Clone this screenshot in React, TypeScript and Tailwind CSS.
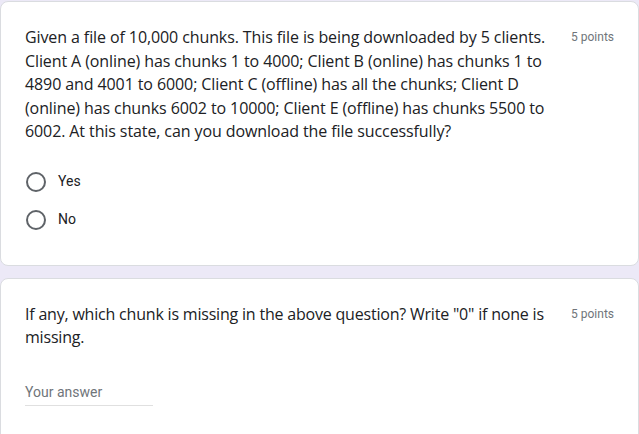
import React from 'react'

function Radio({ label }: { label: string }) {
  return (
    <label className="flex h-[38px] items-center gap-[12px]">
      <span className="h-[20px] w-[20px] rounded-full border-2 border-[#5f6368]" />
      <span className="text-[14px] text-[#202124]" style={{ fontFamily: 'Roboto, Arial, sans-serif' }}>
        {label}
      </span>
    </label>
  )
}

function Points() {
  return (
    <span className="shrink-0 pl-[2px] pt-[2px] text-[12px] text-[#70757a]" style={{ fontFamily: 'Roboto, Arial, sans-serif' }}>
      5 points
    </span>
  )
}

export default function App() {
  return (
    <div
      className="flex min-h-[434px] flex-col gap-[12px] bg-[#ece9f7] pt-[1px] text-[#202124]"
      style={{ fontFamily: '"Open Sans", "Noto Sans", sans-serif' }}
    >
      <div className="rounded-[8px] border border-[#dadce0] bg-white px-[24px] pb-[26px] pt-[24px]">
        <div className="flex items-start justify-between">
          <p className="max-w-[532px] text-[16px] leading-[23.5px] tracking-[-0.1px]">
            Given a file of 10,000 chunks. This file is being downloaded by 5 clients. Client A (online) has chunks 1 to
            4000; Client B (online) has chunks 1 to 4890 and 4001 to 6000; Client C (offline) has all the chunks; Client D
            (online) has chunks 6002 to 10000; Client E (offline) has chunks 5500 to 6002. At this state, can you download
            the file successfully?
          </p>
          <Points />
        </div>
        <div className="mt-[19px] flex flex-col pl-[1px]">
          <Radio label="Yes" />
          <Radio label="No" />
        </div>
      </div>

      <div className="rounded-[8px] border border-[#dadce0] bg-white px-[24px] pb-[40px] pt-[24px]">
        <div className="flex items-start justify-between">
          <p className="max-w-[544px] text-[16px] leading-[23.5px] tracking-[-0.2px]">
            If any, which chunk is missing in the above question? Write "0" if none is missing.
          </p>
          <Points />
        </div>
        <div className="mt-[29px] w-[128px] border-b border-[#e0e0e0] pb-[2px]">
          <span className="text-[14px] text-[#70757a]" style={{ fontFamily: 'Roboto, Arial, sans-serif' }}>
            Your answer
          </span>
        </div>
      </div>
    </div>
  )
}
